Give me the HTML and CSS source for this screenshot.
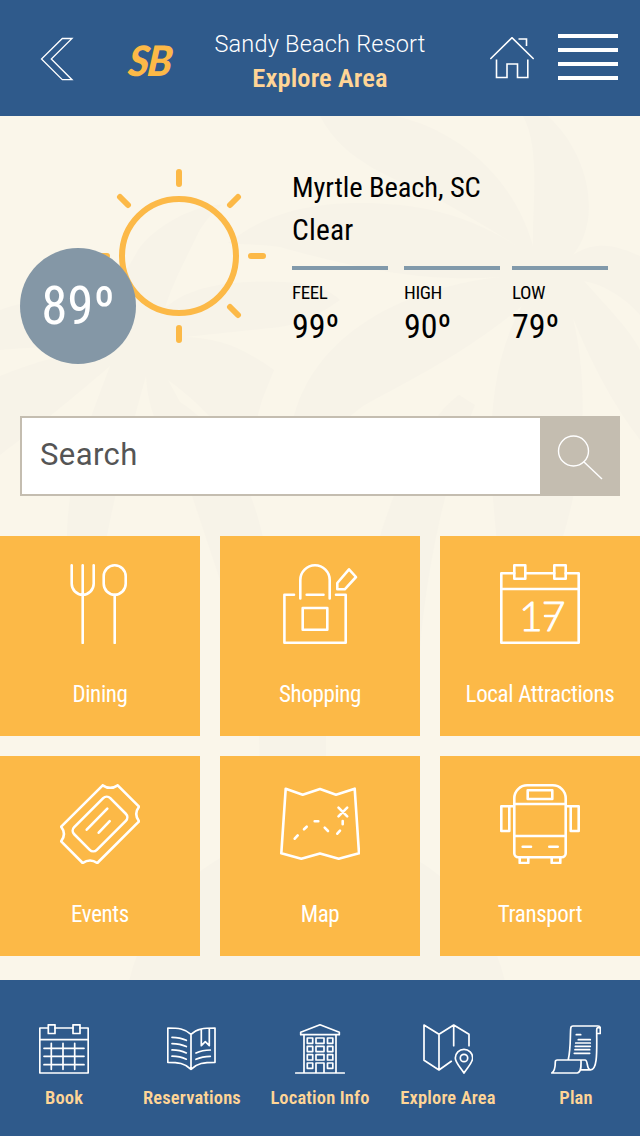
FILE: index.html
```html
<!DOCTYPE html>
<html lang="en">
<head>
    <meta charset="UTF-8">
    <title>Explore Area</title>
    <link rel="stylesheet" href="styles.css">
</head>
<body>
<div id="container">
    <header class="header">
        <a class="back" href="#">
            <svg width="34" height="44" viewBox="0 0 34 44"><path d="M32 1.5H22.3L1.5 22l20.8 20.7H32L11.3 22z"/></svg>
        </a>
        <span class="logo">SB</span>
        <div class="title">
            <p class="resort">Sandy Beach Resort</p>
            <h1><span>Explore Area</span></h1>
        </div>
        <a class="home" href="#">
            <svg width="44" height="42" viewBox="0 0 44 42"><path d="M.3 22L22 .7 43.7 22M28.5 2h8v7M6.5 22.5v18H17V27h10.500v13.500h10.300v-18"/></svg>
        </a>
        <a class="menu" href="#"><i></i><i></i><i></i><i></i></a>
    </header>

    <main class="main">
        <!-- palm leaves -->
        <svg class="palm" width="640" height="864" viewBox="0 116 640 864">
            <path d="M222 205C200 203 155 225 138 250 125 275 110 290 95 312 70 290 30 300 0 310V350C50 345 80 350 100 352 60 352 20 368 0 376V455C40 425 80 392 110 366 90 420 68 470 67 536V620H95C98 560 125 450 146 376 148 420 170 450 192 496L220 580H270C262 510 238 440 180 402L168 380C210 410 235 445 243 470L262 400 274 370C240 345 215 338 185 337L280 327C310 322 325 310 340 300 325 285 300 282 280 282 235 280 190 285 165 308 172 285 185 260 195 240 200 228 208 216 222 205z"/>
            <path d="M320 116C345 165 400 180 440 200 475 220 500 235 520 248 470 215 420 203 360 203 300 203 260 218 228 243 240 245 265 244 280 247 370 272 430 282 500 277 390 290 320 340 297 406L275 475 363 406C420 375 470 350 522 306 480 380 490 480 499 560H555C585 480 590 390 573 318 590 360 610 400 640 440V350C630 330 610 310 584 281 605 285 625 298 640 315V256C625 250 600 237 573 255 602 220 590 155 548 116H523C541 150 532 205 533 246 515 180 460 130 395 116z"/>
            <path d="M459 395C445 405 410 440 380 536V736H415C418 630 430 520 475 405zM256 620H326V850H262z"/>
            <circle cx="317" cy="1025" r="193"/>
        </svg>

        <section class="weather">
            <div class="now">
                <svg class="sun" width="180" height="180" viewBox="0 0 180 180">
                    <circle cx="90" cy="90" r="57"/>
                    <path d="M90 6v12M90 162v12M162 90h12M6 90h12M31 31l8 8M149 31l-8 8M149 149l-8-8"/>
                </svg>
                <div class="temp"><span>89º</span></div>
            </div>
            <div class="info">
                <p>Myrtle Beach, SC</p>
                <p class="sky">Clear</p>
                <ul class="temps">
                    <li><span>FEEL</span><b>99º</b></li>
                    <li><span>HIGH</span><b>90º</b></li>
                    <li><span>LOW</span><b>79º</b></li>
                </ul>
            </div>
        </section>

        <div class="search">
            <div class="field">Search</div>
            <div class="search-btn">
                <svg width="46" height="46" viewBox="0 0 46 46"><circle cx="16.500" cy="17" r="15"/><path d="M26.500 27.500L45 45"/></svg>
            </div>
        </div>

        <ul class="tiles">
            <li>
                <svg width="80" height="80" viewBox="0 0 80 80">
                    <path d="M11.700 1.300V19.700a11 11 0 0 0 22 0V1.300M22.700 1.300V79M54.700 30.700V79"/>
                    <rect x="43.700" y="1.300" width="22" height="29.400" rx="11"/>
                </svg>
                <span>Dining</span>
            </li>
            <li>
                <svg width="80" height="80" viewBox="0 0 80 80">
                    <path d="M14 30.700H4.400v48h61.300v-48H56M26.700 30.700h16.800M20.300 34.500V16a14.700 14.700 0 0 1 29.400 0v18.500M69 5.300l7 7.700-11.300 12.300h-7.400V19z"/>
                    <rect x="22.700" y="44" width="24.600" height="21.700"/>
                </svg>
                <span>Shopping</span>
            </li>
            <li>
                <svg width="80" height="80" viewBox="0 0 80 80">
                    <path d="M14.300 9.300h-13v69.400h77.400V9.300h-13M25.300 9.300h29M1.300 25h77.400M45 52h11"/>
                    <rect x="14.300" y="1.300" width="11" height="13.400"/>
                    <rect x="54.300" y="1.300" width="11.400" height="13.400"/>
                    <text class="day" x="19" y="66.500">17</text>
                </svg>
                <span>Local Attractions</span>
            </li>
            <li>
                <svg width="80" height="80" viewBox="0 0 80 80">
                    <path d="M42.700 1.300q7.500 5 15 0L79 22.700q-5.500 7.300 0 14.600L37.300 79q-7.300-5-14.600 0L1.200 57.300q5.500-7.300 0-14.600z"/>
                    <rect x="14.500" y="24" width="51" height="32" rx="5" transform="rotate(-45 40 40)"/>
                    <path d="M26.700 45.700l20.600-21M38.700 48.700l11-11.500"/>
                </svg>
                <span>Events</span>
            </li>
            <li>
                <svg width="80" height="80" viewBox="0 0 80 80">
                    <path d="M5.700 4.700l17 6L40 5l16 5.700 18.700-6L79 69.300l-20.300 5.400L40 69.500l-18.700 5.200-20-5.400z"/>
                    <path d="M14.700 54.700l3-3.300M24 45.300l2.700-2.600M34.700 37.200h3.600M44.700 43.700L48 47M57.300 49.700l2.700-3M62.700 40.300V37M58.500 23.700l8.700 8.600M67.200 23.700l-8.700 8.600"/>
                </svg>
                <span>Map</span>
            </li>
            <li>
                <svg width="80" height="80" viewBox="0 0 80 80">
                    <path d="M14.300 14.300a13 13 0 0 1 13-13h25.400a13 13 0 0 1 13 13v55a4 4 0 0 1-4 4H18.300a4 4 0 0 1-4-4zM14.300 20h51.400M14.300 52h51.400M22.700 62.700H31M49.300 62.700h8.400M14.300 22.300h-13V47h8V22.300M65.700 22.300h13V47h-8V22.300M19.700 73.300V79h8.600v-5.700M51.700 73.300V79h8.600v-5.700"/>
                    <rect x="27.700" y="6.300" width="24.600" height="8.700"/>
                </svg>
                <span>Transport</span>
            </li>
        </ul>
    </main>

    <footer class="footer">
        <a href="#">
            <svg width="50" height="50" viewBox="0 0 50 50">
                <path d="M9.300 4H.8v45h48.400V4H41M16 4h18M.8 15.700h48.400M12.300 19.300v26M24 19.300v26M35.700 19.300v26M5 24.300h40M5 32.300h40M5 40.700h40"/>
                <rect x="9.300" y=".8" width="6.700" height="8.700"/><rect x="34" y=".8" width="7" height="8.700"/>
            </svg>
            <span>Book</span>
        </a>
        <a href="#">
            <svg width="50" height="50" viewBox="0 0 50 50">
                <path d="M24 45.300V10.300C18 4.500 11 4 .8 4v34.300C11 38.300 18 39.300 24 45.300 30 39.300 37 38.300 48 38.300V4C37 4 30 4.500 24 10.300M34.300 5v16.700l4-4 4 4V4.500M5 13.300q8 0 14.300 3M5 19.600q8 0 14.300 3M5 25.900q8 0 14.300 3M5 32.200q8 0 14.300 3M29 29q6.300-3 14.300-3M29 35.300q6.300-3 14.300-3"/>
            </svg>
            <span>Reservations</span>
        </a>
        <a href="#">
            <svg width="50" height="50" viewBox="0 0 50 50">
                <path d="M.7 49h48.600M5.700 10.700V8.300L25 .8l19.300 7.500v2.400zM9 10.700V49M41 10.700V49M21 49V39h8v10"/>
                <path d="M12.300 14h5.400v5.300h-5.400zM21 14h8v5.300h-8zM32.500 14h5.300v5.300h-5.300zM12.300 22.300h5.400v5.300h-5.400zM21 22.300h8v5.300h-8zM32.500 22.300h5.300v5.300h-5.300zM12.300 30.700h5.400V36h-5.400zM21 30.700h8V36h-8zM32.500 30.700h5.300V36h-5.300zM12.300 39h5.400v5.300h-5.400zM32.500 39h5.300v5.300h-5.300z"/>
            </svg>
            <span>Location Info</span>
        </a>
        <a href="#">
            <svg width="50" height="50" viewBox="0 0 50 50">
                <path d="M28.300 37.300L16 46 1 36.300V1l15 9.300L30.700 1 46 10.300v11.400M16 10.300V46M30.700 1v20.700M41 49c-4-6-8.700-10.500-8.700-15a8.700 8.700 0 0 1 17.400 0C49.700 38.500 45 43 41 49z"/>
                <circle cx="41" cy="34" r="3.700"/>
            </svg>
            <span>Explore Area</span>
        </a>
        <a href="#">
            <svg width="50" height="50" viewBox="0 0 50 50">
                <path d="M17.300 35.500C20 24 19 10 19.800 4q.2-2 2.200-2h25q2.300 0 2.300 2.500v5h-3.600M49 4q-3.300-1.500-3.300 2C45.700 25 47 45.800 39.500 45.800H29.500M39.500 45.800C35 45.800 37.500 36 34 36H6.300q-2 0-2 2C4.300 43 4 47 .8 49h25.500c4.500-1 3.700-8 3.700-13M25.300 10.700h4.400M27.300 15.700h12M24.700 19h14.600M24.300 22.300h15M24 25.700h14.700M23.300 29.300h15.400"/>
            </svg>
            <span>Plan</span>
        </a>
    </footer>
</div>
</body>
</html>
```
FILE: styles.css
```css
*{
    margin:0;
    padding:0;
    box-sizing: border-box;
}
ul{
    list-style: none;
}
a{
    text-decoration: none;
}
svg{
    display: block;
    fill:none;
    stroke:#fff;
}
body{
    background: #faf6ea;
    font-family: Roboto, "Liberation Sans", sans-serif;
    font-stretch: 75%;
}
#container{
    width: 640px;
    height: 1136px;
    display: flex;
    flex-direction: column;
    overflow: hidden;
}

/* header */
.header{
    height: 116px;
    background: #2f5a8b;
    display: flex;
    align-items: center;
    padding:0 22px 0 40px;
}
.back svg{
    margin-top:2px;
    stroke-width: 1.3;
}
.logo{
    width: 46px;
    margin-left:54px;
    margin-top:3px;
    color:#fcb947;
    font: italic 900 42px/44px Lato, sans-serif;
    letter-spacing: -2px;
    transform: skewX(-6deg) scaleX(.96);
}
.title{
    width: 212px;
    margin-left:40px;
    padding-top:6px;
    text-align: center;
    white-space: nowrap;
}
.resort{
    color:#fff;
    font-size: 23.5px;
    font-weight: 300;
    line-height: 34px;
    font-stretch: 100%;
    letter-spacing: .2px;
}
.title h1{
    color:#ffd596;
    font-size: 26.5px;
    font-weight: 600;
    line-height: 34px;
    letter-spacing: .1px;
}
.home{
    margin-left:64px;
}
.home svg{
    stroke-width: 1.6;
}
.menu{
    width: 60px;
    margin-left:24px;
    margin-top:-2px;
    display: grid;
    gap:10px;
}
.menu i{
    height: 4px;
    background: #fff;
}

/* content */
.main{
    height: 864px;
    position: relative;
}
.palm{
    position: absolute;
    top:0;
    left:0;
    z-index: -1;
    fill:#f7f3e8;
    stroke:none;
}
.weather{
    height: 300px;
    display: flex;
    padding:50px 0 0 20px;
}
.now{
    width: 272px;
    position: relative;
}
.sun{
    margin-left:69px;
    stroke:#fcb947;
    stroke-width: 6;
    stroke-linecap: round;
}
.temp{
    position: absolute;
    left:0;
    top:82px;
    width: 116px;
    height: 116px;
    border-radius: 50%;
    background: #8497a6;
    color:#fff;
    font-size: 53px;
    font-weight: 400;
    line-height: 116px;
    text-align: center;
}
.info{
    font-size: 28.5px;
    line-height: 43px;
}
.info p{
    letter-spacing: -.1px;
}
.info .sky{
    font-size: 29.5px;
    letter-spacing: .2px;
}
.temps{
    display: grid;
    grid-template-columns: 112px 108px 96px;
    margin-top:14px;
}
.temps li::before{
    content:"";
    display: block;
    width: 96px;
    height: 4px;
    margin-bottom:11px;
    background: #8199aa;
}
.temps span,.temps b{
    display: block;
    font-weight: 400;
}
.temps span{
    font-size: 19px;
    line-height: 24px;
    letter-spacing: -.4px;
}
.temps b{
    font-size: 34px;
    line-height: 42px;
}

.search{
    height: 80px;
    margin:0 20px 40px;
    display: flex;
    border:2px solid #c4bdb0;
    background: #fff;
}
.field{
    flex:1;
    padding-left:18px;
    color:#555;
    font-size: 31px;
    line-height: 73px;
    font-stretch: 100%;
    letter-spacing: .4px;
}
.search-btn{
    width: 78px;
    background: #c4bdb0;
    padding:16px 0 0 17px;
}
.search-btn svg{
    stroke-width: 1.4;
}

.tiles{
    display: grid;
    grid-template-columns: repeat(3, 200px);
    grid-auto-rows: 200px;
    gap:20px;
}
.tiles li{
    display: flex;
    flex-direction: column;
    align-items: center;
    padding-top:28px;
    background: #fcb947;
    color:#fff;
}
.tiles svg{
    stroke-width: 2.6;
    stroke-linecap: round;
    stroke-linejoin: round;
}
.tiles span{
    margin-top:35px;
    font-size: 23px;
    line-height: 32px;
    letter-spacing: -.35px;
}
.tiles .day{
    fill:#fff;
    stroke:#fff;
    stroke-width: .9;
    font: 300 41px Lato, sans-serif;
    letter-spacing: -1px;
}

/* bottom bar */
.footer{
    height: 156px;
    background: #2f5a8b;
    display: grid;
    grid-template-columns: repeat(5, 128px);
    padding-top:44px;
}
.footer a{
    display: flex;
    flex-direction: column;
    align-items: center;
    color:#ffd596;
    font-size: 18.5px;
    font-weight: 600;
    letter-spacing: .15px;
    line-height: 24px;
    white-space: nowrap;
}
.footer svg{
    stroke-width: 1.7;
    stroke-linecap: round;
    stroke-linejoin: round;
    margin-bottom:12px;
}
```
